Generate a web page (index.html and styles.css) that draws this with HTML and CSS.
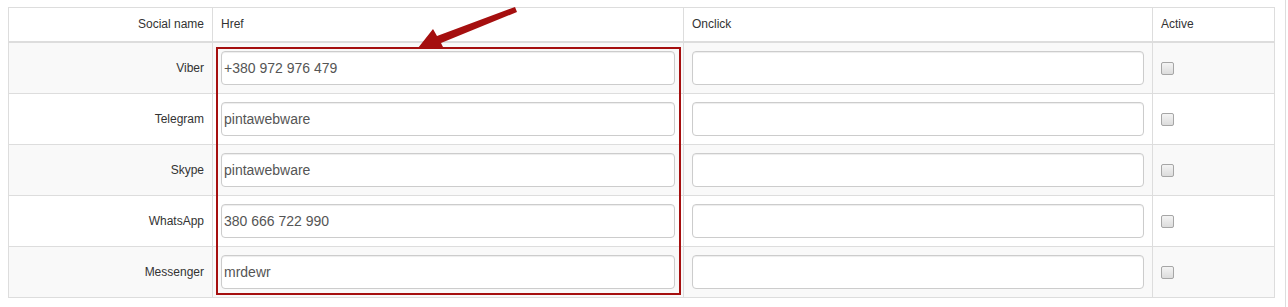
FILE: index.html
```html
<!DOCTYPE html>
<html lang="en">
<head>
    <meta charset="UTF-8">
    <title>Social links</title>
    <link rel="stylesheet" href="styles.css">
</head>
<body>
    <div class="panel">
        <table class="social-table">
            <thead>
                <tr>
                    <th class="col-name">Social name</th>
                    <th class="col-href">Href</th>
                    <th class="col-onclick">Onclick</th>
                    <th class="col-active">Active</th>
                </tr>
            </thead>
            <tbody>
                <tr>
                    <td class="name">Viber</td>
                    <td><input class="field" type="text" value="+380 972 976 479"></td>
                    <td><input class="field" type="text" value=""></td>
                    <td><input class="check" type="checkbox"></td>
                </tr>
                <tr>
                    <td class="name">Telegram</td>
                    <td><input class="field" type="text" value="pintawebware"></td>
                    <td><input class="field" type="text" value=""></td>
                    <td><input class="check" type="checkbox"></td>
                </tr>
                <tr>
                    <td class="name">Skype</td>
                    <td><input class="field" type="text" value="pintawebware"></td>
                    <td><input class="field" type="text" value=""></td>
                    <td><input class="check" type="checkbox"></td>
                </tr>
                <tr>
                    <td class="name">WhatsApp</td>
                    <td><input class="field" type="text" value="380 666 722 990"></td>
                    <td><input class="field" type="text" value=""></td>
                    <td><input class="check" type="checkbox"></td>
                </tr>
                <tr>
                    <td class="name">Messenger</td>
                    <td><input class="field" type="text" value="mrdewr"></td>
                    <td><input class="field" type="text" value=""></td>
                    <td><input class="check" type="checkbox"></td>
                </tr>
            </tbody>
        </table>

        <!-- annotation over the Href column -->
        <div class="highlight"></div>
        <svg class="arrow" width="110" height="50" viewBox="0 0 110 50">
            <polygon points="100,0 102,5 26,36 29,42 3,41 18,22 22,29" fill="#a50f0f"/>
        </svg>
    </div>
</body>
</html>
```

FILE: styles.css
```css
body {
    margin: 0;
    font-family: "Liberation Sans", Arial, sans-serif;
    font-size: 12px;
    color: #333;
    background: #fff;
}

.panel {
    position: relative;
    width: 1277px;
    height: 307px;
    padding: 7px 0 0 8px;
    border-right: 1px solid #ddd;
    box-sizing: content-box;
}

/* Table */
.social-table {
    width: 1267px;
    table-layout: fixed;
    border-collapse: collapse;
    border: 1px solid #ddd;
}
.social-table th,
.social-table td {
    padding: 8px;
    border: 1px solid #ddd;
    line-height: 17px;
    vertical-align: middle;
    text-align: left;
}
.social-table th {
    font-weight: normal;
    border-bottom: 2px solid #ddd;
}
.social-table .col-name,
.social-table .name {
    text-align: right;
}
.col-name { width: 187px; }
.col-href { width: 454px; }
.col-onclick { width: 452px; }
.col-active { width: 105px; }

.social-table tbody tr:nth-child(odd) td {
    background-color: #f9f9f9;
}

/* Inputs */
.field {
    display: block;
    width: 100%;
    height: 34px;
    box-sizing: border-box;
    padding: 0 2px;
    font-family: "Liberation Sans", Arial, sans-serif;
    font-size: 14px;
    color: #555;
    background: #fff;
    border: 1px solid #ccc;
    border-radius: 4px;
    box-shadow: inset 0 1px 1px rgba(0, 0, 0, .075);
    outline: none;
}

.check {
    appearance: none;
    -webkit-appearance: none;
    display: block;
    width: 13px;
    height: 13px;
    margin: 0;
    border: 1px solid #a6a6a6;
    border-radius: 2px;
    background: linear-gradient(#f4f4f4, #dcdcdc);
    box-sizing: border-box;
}

/* Annotation */
.highlight {
    position: absolute;
    left: 216px;
    top: 47px;
    width: 461px;
    height: 244px;
    border: 2px solid #a50f0f;
}
.arrow {
    position: absolute;
    left: 415px;
    top: 7px;
}
```
